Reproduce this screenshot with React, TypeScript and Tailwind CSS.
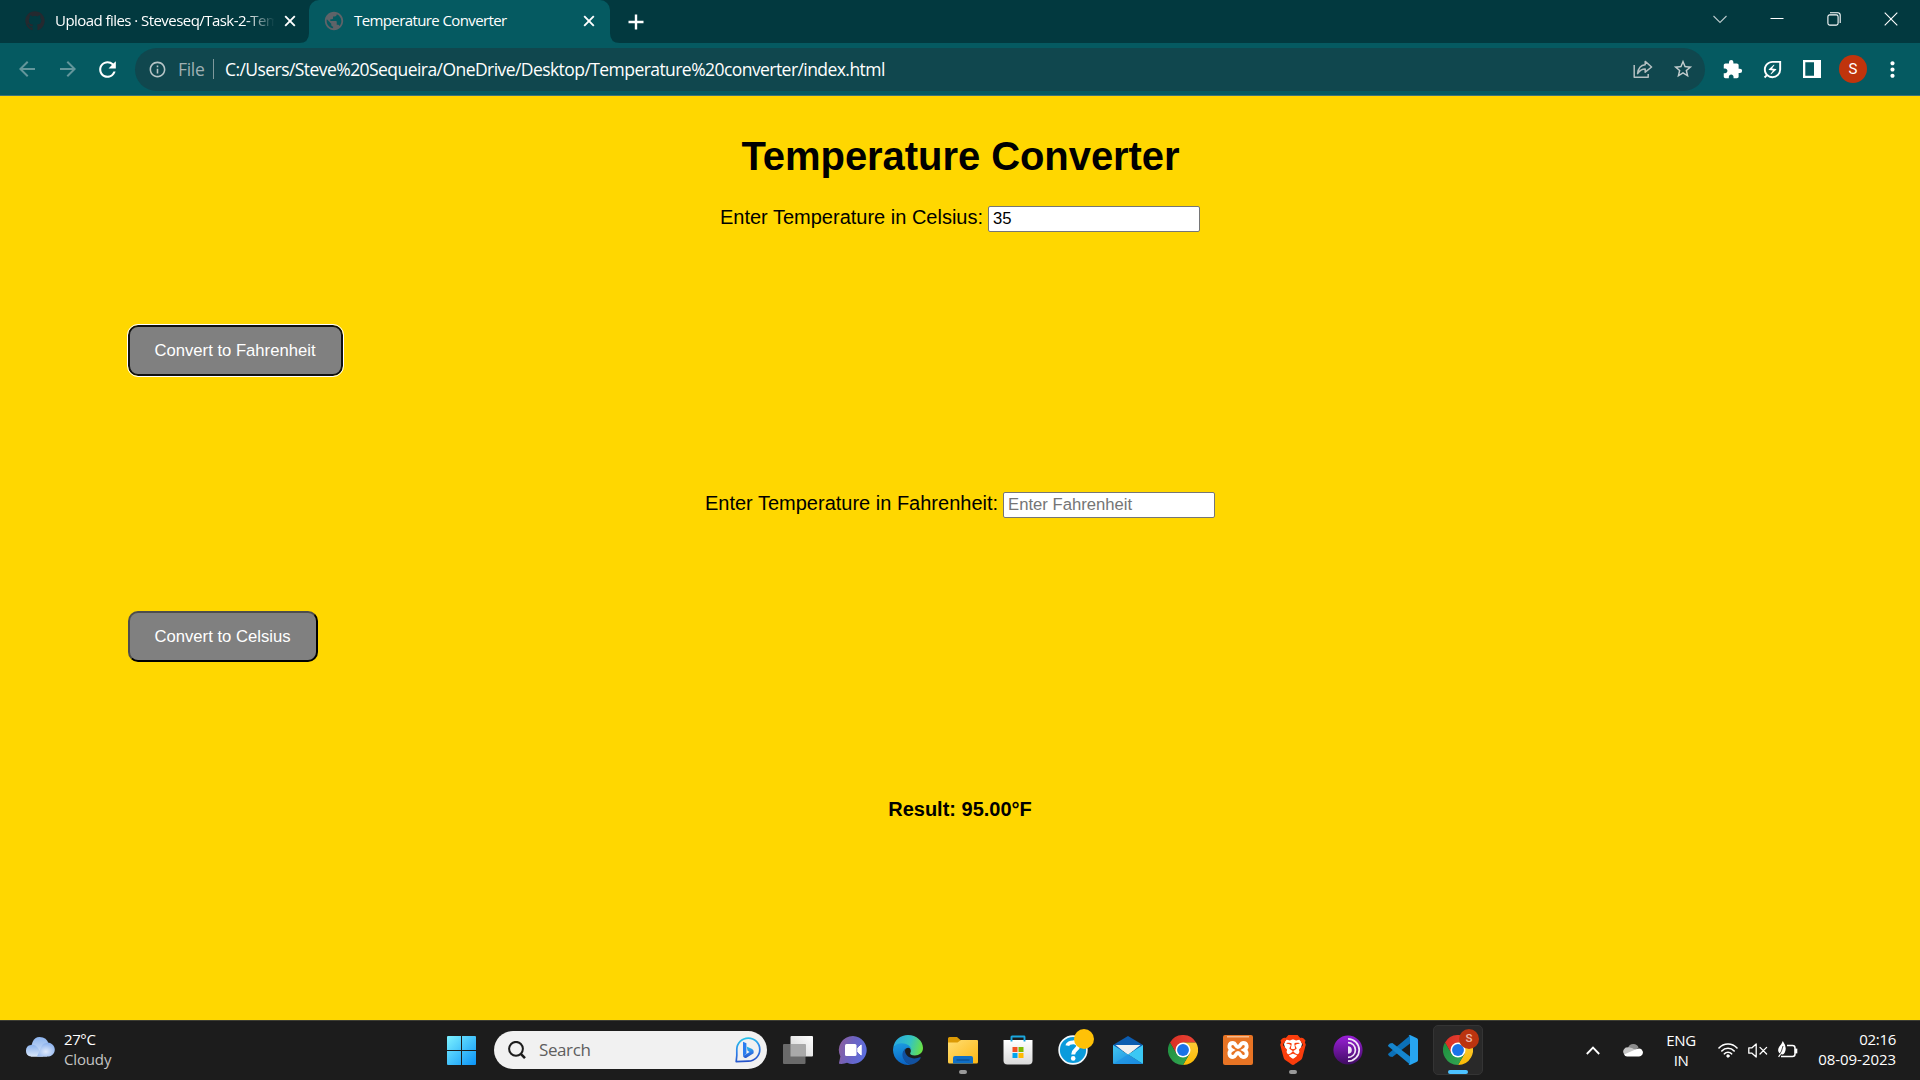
import React, { ReactNode } from "react";
import {
  MdArrowBack,
  MdArrowForward,
  MdRefresh,
  MdInfoOutline,
  MdPublic,
  MdStarBorder,
  MdExtension,
  MdOutlineEnergySavingsLeaf,
  MdMoreVert,
} from "react-icons/md";
import { FaGithub } from "react-icons/fa";
import { SiBrave } from "react-icons/si";

function CloseGlyph() {
  return (
    <svg className="size-[12px] shrink-0" viewBox="0 0 12 12" fill="none" stroke="#fff" strokeWidth="1.9">
      <path d="M1.2 1.2l9.6 9.6M10.8 1.2l-9.6 9.6" />
    </svg>
  );
}

function TabStrip() {
  return (
    <div className="flex h-[43px] bg-[#02393f] text-white">
      <div className="flex w-[309px] items-center pl-[25px] pb-[1px]">
        <FaGithub className="size-[20px] shrink-0 text-[#24292f]" />
        <div className="ml-[10px] w-[222px] pb-[2px] whitespace-nowrap text-[15px] tracking-[-0.55px] [mask-image:linear-gradient(to_right,black_86%,transparent_99%)]">
          Upload files · Steveseq/Task-2-Tem
        </div>
        <div className="ml-[7px] flex">
          <CloseGlyph />
        </div>
      </div>
      <div className="relative flex w-[301px] items-center rounded-t-[10px] bg-[#055a61] pl-[14px] pb-[1px]">
        <svg className="absolute -left-[10px] bottom-0 size-[10px]" viewBox="0 0 10 10">
          <path d="M10 0V10H0Q10 10 10 0Z" fill="#055a61" />
        </svg>
        <svg className="absolute -right-[10px] bottom-0 size-[10px]" viewBox="0 0 10 10">
          <path d="M0 0V10H10Q0 10 0 0Z" fill="#055a61" />
        </svg>
        <MdPublic className="size-[22px] shrink-0 text-[#5f6368]" />
        <div className="ml-[9px] w-[229px] pb-[2px] whitespace-nowrap text-[15px] tracking-[-0.6px]">
          Temperature Converter
        </div>
        <CloseGlyph />
      </div>
      <div className="ml-[18px] flex items-center">
        <svg className="size-[16px]" viewBox="0 0 16 16" stroke="#fff" strokeWidth="2.4">
          <path d="M8 0.5V15.5M0.5 8H15.5" />
        </svg>
      </div>
      <div className="ml-auto flex items-center gap-[43px] pr-[22px] pb-[6px]">
        <svg className="size-[14px]" viewBox="0 0 14 14" fill="none" stroke="#b9c8ca" strokeWidth="1.1">
          <path d="M0.5 4L7 10.5L13.5 4" />
        </svg>
        <svg className="size-[14px]" viewBox="0 0 14 14" stroke="#fff" strokeWidth="1">
          <path d="M0.5 6.5H13.5" />
        </svg>
        <svg className="size-[14px]" viewBox="0 0 14 14" fill="none" stroke="#fff" strokeWidth="1.1">
          <rect x="0.9" y="2.9" width="10.2" height="10.2" rx="1.8" />
          <path d="M3 0.8H10.8Q13.2 0.8 13.2 3.2V11" />
        </svg>
        <svg className="size-[14px]" viewBox="0 0 14 14" stroke="#fff" strokeWidth="1.1">
          <path d="M0.7 0.7L13.3 13.3M13.3 0.7L0.7 13.3" />
        </svg>
      </div>
    </div>
  );
}

function Toolbar() {
  return (
    <div className="flex h-[53px] items-center border-b border-[#3f7377] bg-[#055a61] text-white">
      <MdArrowBack className="ml-[15px] size-[24px] text-[#64969b]" />
      <MdArrowForward className="ml-[17px] size-[24px] text-[#64969b]" />
      <MdRefresh className="ml-[15px] size-[25px]" />
      <div className="ml-[15px] flex h-[43px] w-[1570px] items-center rounded-full bg-[#10474e] pl-[13px] pr-[11px]">
        <MdInfoOutline className="size-[19px] text-[#b7c5c7]" />
        <span className="ml-[11px] w-[35px] text-[17.5px] tracking-[-0.3px] text-[#9fb0b3]">File</span>
        <span className="h-[20px] w-px bg-[#7f999c]" />
        <span className="ml-[11px] whitespace-nowrap text-[17.5px] tracking-[-0.56px]">
          C:/Users/Steve%20Sequeira/OneDrive/Desktop/Temperature%20converter/index.html
        </span>
        <svg
          className="ml-auto size-[20px]"
          viewBox="0 0 20 20"
          fill="none"
          stroke="#b4bfc1"
          strokeWidth="1.5"
          strokeLinejoin="round"
        >
          <path d="M1.2 6V18.2H15.2V15" />
          <path d="M4.6 14.6C5.2 9.2 7.8 6.2 12.2 5.8V2.4L18.6 8L12.2 13.2V9.9C9 9.9 6.6 11.4 4.6 14.6Z" />
        </svg>
        <MdStarBorder className="ml-[19px] size-[22px] text-[#c3cdce]" />
      </div>
      <MdExtension className="ml-[17px] size-[21px]" />
      <MdOutlineEnergySavingsLeaf className="ml-[18px] size-[23px]" />
      <svg className="ml-[19px] size-[18px]" viewBox="0 0 18 18">
        <path fillRule="evenodd" d="M0 0H18V18H0ZM2.3 2.3V15.7H11V2.3Z" fill="#fff" />
      </svg>
      <span className="ml-[18px] flex size-[28px] items-center justify-center rounded-full bg-[#c0340c] font-['Roboto'] text-[15px]">
        S
      </span>
      <MdMoreVert className="ml-[13px] size-[25px]" />
    </div>
  );
}

function ConverterPage() {
  return (
    <main className="flex h-[924px] flex-col bg-[#ffd700] pt-[37px] font-['Liberation_Sans',Arial,sans-serif] text-black">
      <h1 className="pl-[1px] text-center text-[40px] leading-[46px] font-bold tracking-[-0.06px]">
        Temperature Converter
      </h1>
      <div className="mt-[27px] flex h-[26px] justify-center">
        <label className="text-[20px] leading-[22px]">Enter Temperature in Celsius:</label>
        <input
          className="ml-[5px] h-[26px] w-[212px] rounded-[2px] border border-[#767676] bg-white px-[4px] text-[16.67px] outline-none"
          defaultValue="35"
        />
      </div>
      <button className="mt-[93px] ml-[128px] h-[51px] w-[215px] rounded-[10px] border-2 border-[#101010] bg-[#808080] pr-[1px] text-[16.67px] text-white outline outline-1 outline-white">
        Convert to Fahrenheit
      </button>
      <div className="mt-[116px] flex h-[26px] justify-center">
        <label className="text-[20px] leading-[22px]">Enter Temperature in Fahrenheit:</label>
        <input
          className="ml-[5px] h-[26px] w-[212px] rounded-[2px] border border-[#767676] bg-white px-[4px] text-[16.67px] outline-none placeholder:text-[#757575]"
          placeholder="Enter Fahrenheit"
        />
      </div>
      <button className="mt-[93px] ml-[128px] h-[51px] w-[190px] rounded-[10px] border-2 border-t-[#4d4d4d] border-r-black border-b-black border-l-[#4d4d4d] bg-[#808080] pr-[1px] text-[16.67px] text-white">
        Convert to Celsius
      </button>
      <p className="mt-[136px] text-center text-[20px] leading-[23px] font-bold">Result: 95.00°F</p>
    </main>
  );
}

function ChromeLogo({ id }: { id: string }) {
  return (
    <svg className="size-[30px]" viewBox="0 0 48 48">
      <defs>
        <linearGradient id={`${id}-r`} x1="0" y1="0" x2="1" y2="0">
          <stop offset="0" stopColor="#d93025" />
          <stop offset="1" stopColor="#ea4335" />
        </linearGradient>
        <linearGradient id={`${id}-y`} x1="0" y1="0" x2="0" y2="1">
          <stop offset="0" stopColor="#fcc934" />
          <stop offset="1" stopColor="#fbbc04" />
        </linearGradient>
        <linearGradient id={`${id}-g`} x1="1" y1="1" x2="0" y2="0">
          <stop offset="0" stopColor="#34a853" />
          <stop offset="1" stopColor="#1e8e3e" />
        </linearGradient>
      </defs>
      <path d="M24 12H44.8A24 24 0 0 0 3.2 12L13.6 30Z" fill={`url(#${id}-r)`} />
      <path d="M34.4 30L24 48A24 24 0 0 0 44.8 12H24Z" fill={`url(#${id}-y)`} />
      <path d="M13.6 30L3.2 12A24 24 0 0 0 24 48L34.4 30Z" fill={`url(#${id}-g)`} />
      <circle cx="24" cy="24" r="12" fill="#fff" />
      <circle cx="24" cy="24" r="9.5" fill="#1a73e8" />
    </svg>
  );
}

function TaskItem({ children, running = false }: { children: ReactNode; running?: boolean }) {
  return (
    <div className="relative flex h-[50px] w-[55px] items-center justify-center">
      {children}
      {running && <span className="absolute bottom-[1px] h-[4px] w-[8px] rounded-full bg-[#999]" />}
    </div>
  );
}

function WindowsLogo() {
  return (
    <svg className="size-[29px]" viewBox="0 0 29 29">
      <defs>
        <linearGradient id="win" x1="0" y1="0" x2="1" y2="1">
          <stop offset="0" stopColor="#7df2ff" />
          <stop offset="1" stopColor="#0a93f7" />
        </linearGradient>
      </defs>
      <path
        d="M1 0H14V14H0V1Q0 0 1 0ZM15 0H28Q29 0 29 1V14H15ZM0 15H14V29H1Q0 29 0 28ZM15 15H29V28Q29 29 28 29H15Z"
        fill="url(#win)"
      />
    </svg>
  );
}

function BingIcon() {
  return (
    <svg className="size-[26px]" viewBox="0 0 26 26" fill="none">
      <defs>
        <linearGradient id="bing" x1="0.3" y1="0" x2="0.5" y2="1">
          <stop offset="0" stopColor="#25c4ea" />
          <stop offset="0.5" stopColor="#2f83ea" />
          <stop offset="1" stopColor="#2450c8" />
        </linearGradient>
      </defs>
      <path
        d="M1.2 24.6L1.8 18.5V12.6A11.5 11.5 0 1 1 13.3 24.1L1.2 24.6Z"
        stroke="url(#bing)"
        strokeWidth="1.7"
        strokeLinejoin="round"
      />
      <path d="M8 4.8L11.4 6.2V16.8L8 19.2Z" fill="#2a7df0" />
      <path d="M8 19L14.6 14.9L12.6 13.8L11.6 9.6L17.2 12Q19.4 13.4 18.6 16.2L11.5 20.8Q9 21.6 8 19Z" fill="url(#bing)" />
    </svg>
  );
}

function EdgeLogo() {
  return (
    <svg className="size-[30px]" viewBox="0 0 30 30">
      <defs>
        <linearGradient id="edge-top" x1="0" y1="0.4" x2="1" y2="0.6">
          <stop offset="0" stopColor="#28a9e0" />
          <stop offset="0.55" stopColor="#35c4c0" />
          <stop offset="1" stopColor="#6be340" />
        </linearGradient>
        <linearGradient id="edge-mid" x1="0.3" y1="0" x2="0.5" y2="1">
          <stop offset="0" stopColor="#1b9be0" />
          <stop offset="1" stopColor="#0a63c4" />
        </linearGradient>
      </defs>
      <path
        d="M0.2 13C1.2 5 7.4 0 15 0C23.6 0 30 6 30 13C30 17.8 26.2 20.4 21.8 20.4C18.4 20.4 16.8 19.2 17.2 18.2C18.6 16 18 12.8 14 11C9 9 3 9.6 0.2 13Z"
        fill="url(#edge-top)"
      />
      <path
        d="M0 15C0 11 3.6 8.2 8.6 8.2C14 8.2 18.5 11.4 18.5 15.4C18.2 13 15 11.8 13 13.4C7 18 11 28.4 18 29.6A15 15 0 0 1 0 15Z"
        fill="url(#edge-mid)"
      />
      <path
        d="M13 13.2C9.4 15.6 8.4 20 10.6 24C12.6 27.8 16.4 30 18.6 29.5C23 28.6 26 26 27.7 23C28 22.2 27.4 22 26.8 22.3C20.8 25 12.4 22.6 12 15.8C12 14.8 12.4 13.8 13 13.2Z"
        fill="#12519f"
      />
    </svg>
  );
}

function Taskbar() {
  return (
    <footer className="flex h-[60px] items-center border-t border-[#3d3d33] bg-[#1c1c1c] pb-[1px] text-white">
      <div className="flex w-[447px] items-center pl-[25px]">
        <svg className="mb-[6px] h-[20px] w-[30px]" viewBox="0 0 30 20">
          <defs>
            <linearGradient id="cloud" x1="0" y1="0" x2="0" y2="1">
              <stop offset="0" stopColor="#8db4ee" />
              <stop offset="1" stopColor="#d9e7fb" />
            </linearGradient>
            <radialGradient id="cloud-front" cx="0.5" cy="0.65" r="0.6">
              <stop offset="0" stopColor="#dfeafc" />
              <stop offset="1" stopColor="#8eb3ee" />
            </radialGradient>
          </defs>
          <path d="M6 19.5Q5 0 14.5 0Q22 0 23.5 7L22 19.5Z" fill="url(#cloud)" />
          <path d="M6 8Q10 7 13 11L18 19.5H6A5.8 5.8 0 0 1 6 8Z" fill="url(#cloud)" />
          <path d="M16.5 9.5A7 7 0 1 1 24 19.5H12Z" fill="url(#cloud-front)" />
        </svg>
        <div className="mb-[3px] ml-[9px] text-[15px] leading-[20px]">
          <div className="tracking-[-0.4px]">27°C</div>
          <div className="tracking-[-0.15px] text-[#c4c4c4]">Cloudy</div>
        </div>
      </div>
      <WindowsLogo />
      <div className="ml-[18px] flex h-[38px] w-[273px] items-center rounded-full bg-[#f1f1f1] pl-[14px] pr-[6px]">
        <svg className="size-[18px]" viewBox="0 0 18 18" fill="none" stroke="#1c1c1c" strokeWidth="2">
          <circle cx="8" cy="7.8" r="6.9" />
          <path d="M12.8 12.8L17 17.2" strokeWidth="2.5" />
        </svg>
        <span className="ml-[13px] text-[17px] tracking-[-0.4px] text-[#5e5e5e]">Search</span>
        <span className="ml-auto flex">
          <BingIcon />
        </span>
      </div>
      <div className="ml-[3.5px] flex items-center">
        <TaskItem>
          <svg className="h-[28px] w-[30px]" viewBox="0 0 30 28">
            <defs>
              <linearGradient id="tv" x1="0" y1="1" x2="1" y2="0">
                <stop offset="0" stopColor="#d2d2d2" />
                <stop offset="1" stopColor="#fff" />
              </linearGradient>
            </defs>
            <rect x="7.5" y="0" width="22.5" height="20.5" rx="1" fill="url(#tv)" />
            <rect x="0" y="8" width="22.5" height="20" rx="1" fill="#6a6a6a" />
            <rect x="7.5" y="8" width="15" height="12.5" fill="#a9a9a9" />
          </svg>
        </TaskItem>
        <TaskItem>
          <svg className="size-[30px]" viewBox="0 0 30 30">
            <defs>
              <linearGradient id="chat" x1="0" y1="0.3" x2="1" y2="0.6">
                <stop offset="0" stopColor="#8a5f9f" />
                <stop offset="0.5" stopColor="#6a63c4" />
                <stop offset="1" stopColor="#5b6fe0" />
              </linearGradient>
            </defs>
            <path d="M15 1A14 14 0 1 1 9 27.8Q6 29.3 1.2 28.8Q0.8 28.5 1.2 27L2.4 21.5A14 14 0 0 1 15 1Z" fill="url(#chat)" />
            <rect x="7" y="9" width="11.5" height="12" rx="1.5" fill="#fff" />
            <path d="M19.8 13L23.2 10V20L19.8 17Z" fill="#fff" stroke="#fff" strokeLinejoin="round" />
          </svg>
        </TaskItem>
        <TaskItem>
          <EdgeLogo />
        </TaskItem>
        <TaskItem running>
          <svg className="h-[28px] w-[30px]" viewBox="0 0 30 28">
            <defs>
              <linearGradient id="folder" x1="0" y1="0" x2="1" y2="1">
                <stop offset="0" stopColor="#ffde73" />
                <stop offset="1" stopColor="#fdb714" />
              </linearGradient>
            </defs>
            <path d="M0 2.5Q0 1 1.5 1H9L13 4.5H28V12H0Z" fill="#dc9a05" />
            <path d="M0 6.5H9.5L13 4H29Q30 4 30 5V26Q30 27.5 28.5 27.5H1.5Q0 27.5 0 26Z" fill="url(#folder)" />
            <path d="M5 27.5V22Q5 20 7 20H23Q25 20 25 22V27.5Z" fill="#0f6fc6" />
            <path d="M8.5 24H21.5" stroke="#0a4a8d" strokeWidth="1.2" />
          </svg>
        </TaskItem>
        <TaskItem>
          <svg className="size-[30px]" viewBox="0 0 30 30">
            <defs>
              <linearGradient id="store" x1="0" y1="0" x2="0" y2="1">
                <stop offset="0" stopColor="#fff" />
                <stop offset="1" stopColor="#dadada" />
              </linearGradient>
            </defs>
            <path d="M0.5 5H29.5V25.5Q29.5 29.5 25.5 29.5H4.5Q0.5 29.5 0.5 25.5Z" fill="url(#store)" />
            <path d="M8.5 6.5V2Q8.5 1.5 9 1.5H21Q21.5 1.5 21.5 2V6.5" fill="none" stroke="#1aa7de" strokeWidth="1.9" />
            <path d="M9.5 12H14.5V17H9.5Z" fill="#f25022" />
            <path d="M15.5 12H20.5V17H15.5Z" fill="#7fba00" />
            <path d="M9.5 18H14.5V23H9.5Z" fill="#00a4ef" />
            <path d="M15.5 18H20.5V23H15.5Z" fill="#ffb900" />
          </svg>
        </TaskItem>
        <TaskItem>
          <svg className="size-[30px]" viewBox="0 0 30 30" fill="none">
            <circle cx="15" cy="15" r="13.9" fill="#0a9bdc" stroke="#f2f9fd" strokeWidth="1.6" />
            <path
              d="M9.4 10.6C10 6.6 20.6 5.8 20.2 11.2C20 14.6 15.2 14.8 15.2 19.4"
              stroke="#fff"
              strokeWidth="4"
            />
            <circle cx="15.2" cy="23.4" r="2.3" fill="#fff" />
          </svg>
          <span className="absolute top-[4px] right-[6.5px] size-[20px] rounded-full bg-[#ffc107]" />
        </TaskItem>
        <TaskItem>
          <svg className="h-[28px] w-[30px]" viewBox="0 0 30 28">
            <defs>
              <linearGradient id="mail" x1="0" y1="0" x2="1" y2="1">
                <stop offset="0" stopColor="#42c8f2" />
                <stop offset="1" stopColor="#1583dc" />
              </linearGradient>
            </defs>
            <path d="M0 9L15 0L30 9V15H0Z" fill="#0b5cb0" />
            <path d="M2.5 9H27.5L15 19Z" fill="#f0f0f0" />
            <path d="M0 9L15 18.5L30 28H1Q0 28 0 27Z" fill="url(#mail)" />
            <path d="M30 9L15 18.5L30 28Z" fill="#3bc8f4" />
            <path d="M15 18.5L0 28H30Z" fill="#1d8fe2" opacity="0.6" />
          </svg>
        </TaskItem>
        <TaskItem>
          <ChromeLogo id="c1" />
        </TaskItem>
        <TaskItem>
          <svg className="size-[30px]" viewBox="0 0 30 30" fill="none">
            <rect width="30" height="30" rx="2" fill="#e87424" />
            <rect x="4" y="1" width="22" height="1.5" fill="#f6b88a" />
            <path
              d="M10 8C5.6 8 5.4 13.2 8.6 15C5.2 16.8 5.8 22 10 22C13 22 12.4 18 15 18C17.6 18 17.2 22 20 22C24.4 22 24.8 16.8 21.4 15C24.8 13.2 24.4 8 20 8C17.2 8 17.6 12 15 12C12.4 12 13 8 10 8Z"
              stroke="#fff"
              strokeWidth="3.8"
            />
          </svg>
        </TaskItem>
        <TaskItem running>
          <svg className="absolute h-[24px] w-[20px]" viewBox="0 0 20 24">
            <path d="M3 1H17L19 6L16 17L10 22L4 17L1 6Z" fill="#fff" />
          </svg>
          <SiBrave className="relative size-[30px] text-[#fb3d0c]" />
        </TaskItem>
        <TaskItem>
          <svg className="size-[30px]" viewBox="0 0 30 30" fill="none">
            <defs>
              <linearGradient id="tor" x1="0" y1="0" x2="0" y2="1">
                <stop offset="0" stopColor="#9b1fd8" />
                <stop offset="1" stopColor="#3f0c62" />
              </linearGradient>
            </defs>
            <circle cx="15" cy="15" r="14.6" fill="url(#tor)" />
            <g stroke="#efe6f6" strokeWidth="1.7">
              <path d="M15 3.8A11.2 11.2 0 0 1 15 26.2" />
              <path d="M15 7.6A7.4 7.4 0 0 1 15 22.4" />
            </g>
            <path d="M15 11.2A3.8 3.8 0 0 1 15 18.8Z" fill="#efe6f6" />
          </svg>
        </TaskItem>
        <TaskItem>
          <svg className="size-[30px]" viewBox="0 0 30 30">
            <path d="M22 0.4V8.4L4.4 22L1.8 21.6L0.3 20Q-0.2 19.2 0.5 18.5Z" fill="#0b70b8" />
            <path d="M22 29.6V21.6L4.4 8L1.8 8.6L0.3 10Q-0.2 10.8 0.5 11.5Z" fill="#1585cd" />
            <path d="M22 0L29 3.2Q30 3.8 30 5V25Q30 26.2 29 26.8L22 30Q21 30 20.4 29.2Q22 29.4 22 27.6V2.4Q22 0.6 20.4 0.8Z" fill="#27a5f1" />
          </svg>
        </TaskItem>
        <div className="flex w-[55px] justify-center">
          <div className="relative flex size-[50px] items-center justify-center rounded-[5px] border border-[#343434] bg-[#292929]">
            <ChromeLogo id="c2" />
            <span className="absolute top-[3px] right-[3px] flex size-[20px] items-center justify-center rounded-full bg-[#bb340f] font-['Roboto'] text-[11.5px] font-medium text-[#efb9a8]">
              S
            </span>
            <span className="absolute bottom-0 h-[4px] w-[20px] rounded-full bg-[#4cc2ff]" />
          </div>
        </div>
      </div>
      <div className="ml-auto flex items-center pr-[24px]">
        <svg className="h-[9px] w-[14px]" viewBox="0 0 14 9" fill="none" stroke="#fff" strokeWidth="1.8">
          <path d="M0.8 8L7 1.6L13.2 8" />
        </svg>
        <svg className="ml-[23px] h-[14px] w-[20px]" viewBox="0 0 20 14">
          <path d="M5 5A5.6 5.6 0 0 1 15.6 4.6L10 9Z" fill="#8c8c8c" />
          <path d="M1 11A4.2 4.2 0 0 1 5 4.4Q8 4 13 7.2L3 13Z" fill="#c6c6c6" />
          <path d="M1 11.4L13 6.2Q18 4.2 19.6 8A4 4 0 0 1 16 13.5H4Q2 13.4 1 11.4Z" fill="#fff" />
        </svg>
        <div className="mb-[1px] ml-[22px] w-[32px] text-center text-[15px] leading-[20px] tracking-[-0.4px]">
          <div>ENG</div>
          <div>IN</div>
        </div>
        <svg className="ml-[21px] h-[16px] w-[20px]" viewBox="0 0 20 16" fill="none" stroke="#fff" strokeWidth="1.6" strokeLinecap="round">
          <path d="M1 6A12.2 12.2 0 0 1 19 6" />
          <path d="M3.8 9A8.4 8.4 0 0 1 16.2 9" />
          <path d="M6.4 11.8A4.9 4.9 0 0 1 13.6 11.8" />
          <circle cx="10" cy="14" r="1.2" fill="#fff" strokeWidth="1" />
        </svg>
        <svg className="ml-[10px] h-[15px] w-[20px]" viewBox="0 0 20 15" fill="none" stroke="#fff" strokeWidth="1.3" strokeLinejoin="round">
          <path d="M0.8 4.8H4L8.2 1V14L4 10.2H0.8Z" />
          <path d="M12 4.4L18.6 11M18.6 4.4L12 11" strokeLinecap="round" />
        </svg>
        <svg className="mb-[2px] ml-[9px] h-[18px] w-[21px]" viewBox="0 0 21 18" fill="none">
          <path d="M10 5.5H15.5Q18 5.5 18 8V14Q18 16.5 15.5 16.5H4" stroke="#fff" strokeWidth="1.5" />
          <path d="M19 8.6V13.4" stroke="#fff" strokeWidth="2.6" />
          <path d="M5.5 14.5C1 14 0 9.6 2.4 6.6Q4.6 4.4 5.8 1Q10.4 7.4 7.8 12.4Q6.8 14.2 5.5 14.5Z" fill="#fff" />
          <path d="M6 6Q5.4 11 1 16.8" stroke="#1c1c1c" strokeWidth="0.8" />
          <path d="M3.6 14L1.6 16.8" stroke="#fff" strokeWidth="1.2" />
        </svg>
        <div className="mb-[3px] w-[98px] text-right text-[15px] leading-[20px] tracking-[-0.05px] whitespace-nowrap">
          <div className="tracking-[-0.3px]">02:16</div>
          <div>08-09-2023</div>
        </div>
      </div>
    </footer>
  );
}

export default function App() {
  return (
    <div className="flex h-[1080px] w-[1920px] flex-col overflow-hidden font-['Open_Sans','Noto_Sans',sans-serif]">
      <TabStrip />
      <Toolbar />
      <ConverterPage />
      <Taskbar />
    </div>
  );
}
